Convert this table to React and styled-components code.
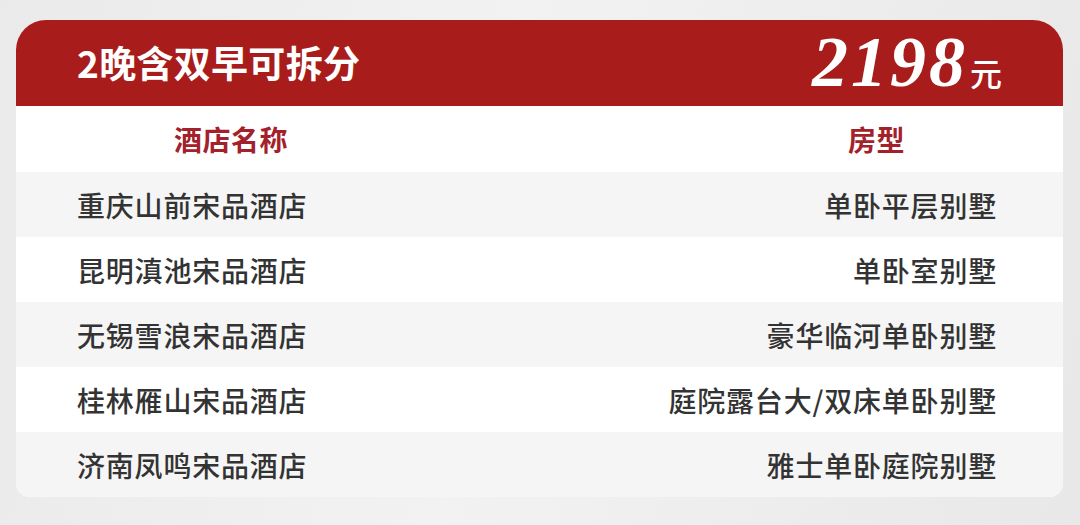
import React from 'react';
import styled, { createGlobalStyle } from 'styled-components';

const hotels = [
    { name: '重庆山前宋品酒店', room: '单卧平层别墅' },
    { name: '昆明滇池宋品酒店', room: '单卧室别墅' },
    { name: '无锡雪浪宋品酒店', room: '豪华临河单卧别墅' },
    { name: '桂林雁山宋品酒店', room: '庭院露台大/双床单卧别墅' },
    { name: '济南凤鸣宋品酒店', room: '雅士单卧庭院别墅' },
];

const App = () => {
    return (
        <>
            <GlobalStyle />
            <Page>
                <Card>
                    <Banner>
                        <Title>2晚含双早可拆分</Title>
                        <Price>
                            <Amount>2198</Amount>
                            <Unit>元</Unit>
                        </Price>
                    </Banner>
                    <HeadRow>
                        <HeadCell>酒店名称</HeadCell>
                        <HeadCell>房型</HeadCell>
                    </HeadRow>
                    {hotels.map((h, i) => (
                        <Row key={h.name} $shaded={i % 2 === 0}>
                            <Cell>{h.name}</Cell>
                            <Cell>{h.room}</Cell>
                        </Row>
                    ))}
                </Card>
            </Page>
        </>
    );
};

export default App;

const GlobalStyle = createGlobalStyle`
body {
    margin: 0;
    background: #ececec;
    font-family: "Noto Sans CJK SC", "Noto Sans", sans-serif;
}
`

const Page = styled.div`
width: 1080px;
height: 525px;
padding: 20px 17px 0 16px;
box-sizing: border-box;
background: linear-gradient(100deg, #eaeaea 0%, #f2f2f2 45%, #e8e8e8 100%);
`

const Card = styled.div`
width: 1047px;
background: #fff;
border-radius: 30px 30px 14px 14px;
overflow: hidden;
`

const Banner = styled.div`
height: 86px;
background: #a81d1b;
display: flex;
align-items: center;
justify-content: space-between;
padding: 0 61px 0 61px;
`

const Title = styled.div`
color: #fff;
font-size: 37px;
font-weight: 700;
letter-spacing: 0.3px;
margin-top: -2px;
`

const Price = styled.div`
display: flex;
align-items: baseline;
color: #fff;
margin-top: -2px;
`

const Amount = styled.span`
font-family: "Liberation Serif", serif;
font-style: italic;
font-weight: 700;
font-size: 72px;
line-height: 1;
letter-spacing: 3px;
`

const Unit = styled.span`
font-size: 32px;
font-weight: 500;
margin-left: 2px;
`

const HeadRow = styled.div`
height: 66px;
display: flex;
align-items: center;
justify-content: space-between;
padding: 0 158px;
`

const HeadCell = styled.div`
color: #a3212a;
font-size: 28px;
font-weight: 700;
letter-spacing: 0.5px;
`

const Row = styled.div`
height: 65px;
display: flex;
align-items: center;
justify-content: space-between;
padding: 0 66px 0 61px;
background: ${props => props.$shaded ? '#f5f5f5' : '#fff'};
`

const Cell = styled.div`
color: #333;
font-size: 28px;
font-weight: 500;
letter-spacing: 0.8px;
`
